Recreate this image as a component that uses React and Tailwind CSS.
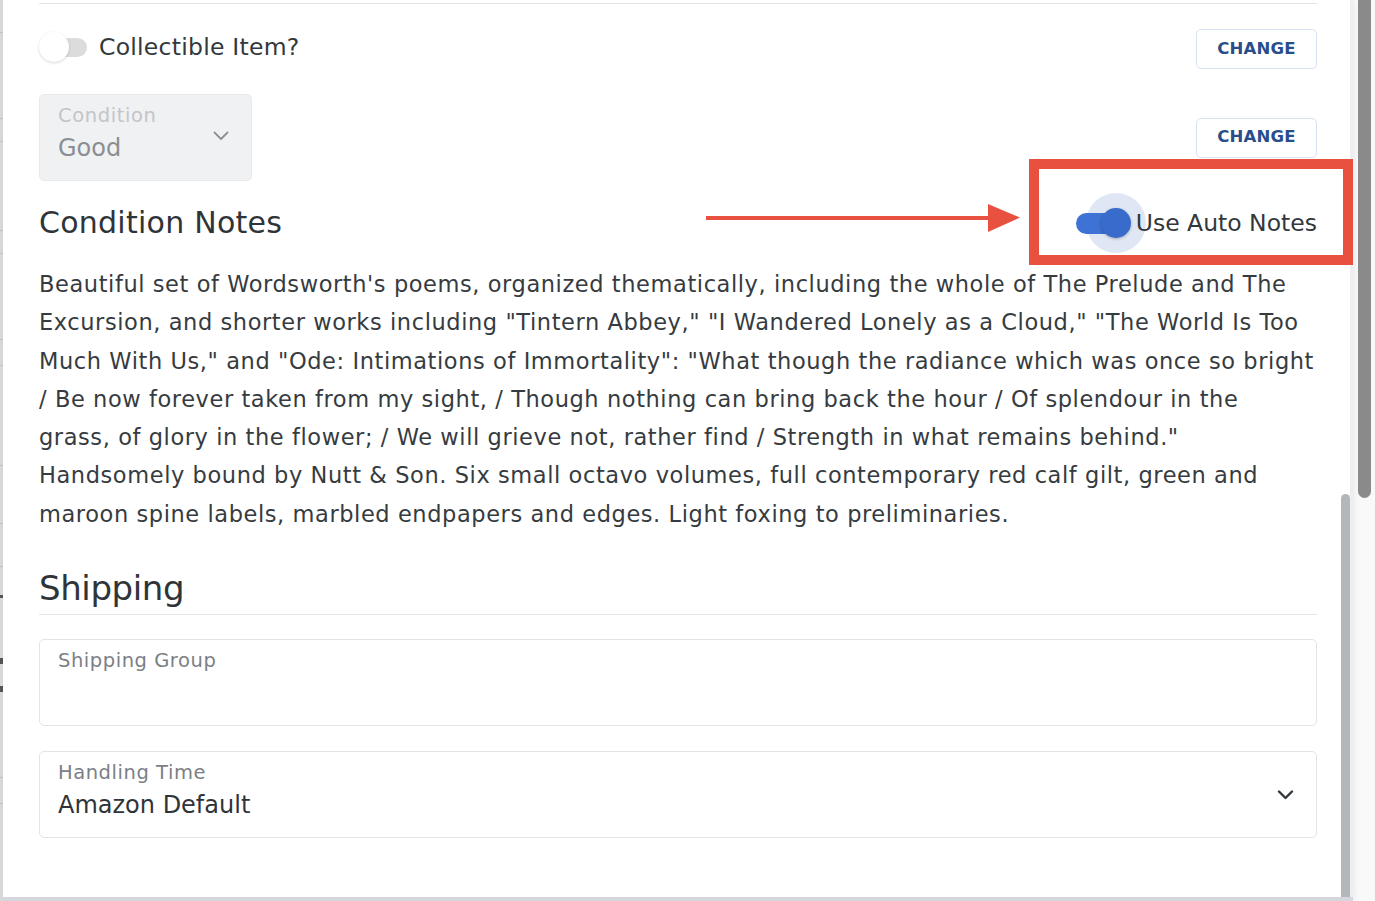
import React from "react";

function Chevron({ className, stroke = "#8a8d91", width = 2 }) {
  return (
    <svg className={className} viewBox="0 0 16 10" fill="none">
      <polyline points="1.5,1.5 8,8 14.5,1.5" stroke={stroke} strokeWidth={width} strokeLinecap="round" strokeLinejoin="round" />
    </svg>
  );
}

function ChangeButton() {
  return (
    <button className="w-[121px] h-[40px] border border-[#d8e2f3] rounded-[5px] bg-white text-[#2a4d8b] font-bold text-[16.5px] tracking-[0.2px] flex items-center justify-center">
      CHANGE
    </button>
  );
}

export default function App() {
  return (
    <div
      className="relative w-[1375px] h-[901px] overflow-hidden bg-[#f9f9f9] flex"
      style={{ fontFamily: "'DejaVu Sans', Inter, sans-serif" }}
    >
      {/* backdrop sliver */}
      <div className="w-[3px] h-full bg-[#d9d9d9] flex flex-col">
        <div className="mt-[32px] h-px bg-[#c4c4c4]" />
        <div className="mt-[85px] h-px bg-[#c4c4c4]" />
        <div className="mt-[22px] h-px bg-[#c4c4c4]" />
        <div className="mt-[88px] h-px bg-[#c4c4c4]" />
        <div className="mt-[22px] h-px bg-[#c4c4c4]" />
        <div className="mt-[85px] h-px bg-[#c4c4c4]" />
        <div className="mt-[25px] h-px bg-[#c4c4c4]" />
        <div className="mt-[99px] h-px bg-[#c4c4c4]" />
        <div className="mt-[57px] h-px bg-[#c4c4c4]" />
        <div className="mt-[42px] h-px bg-[#c4c4c4]" />
        <div className="mt-[28px] h-[3px] bg-[#555]" />
        <div className="mt-[60px] h-[6px] bg-[#555]" />
        <div className="mt-[22px] h-[6px] bg-[#555]" />
        <div className="mt-[85px] h-px bg-[#c4c4c4]" />
        <div className="mt-[25px] h-px bg-[#c4c4c4]" />
      </div>

      {/* modal */}
      <div className="w-[1350px] h-full flex flex-col bg-white shadow-[2px_0_6px_rgba(0,0,0,0.06)]">
        <div className="flex flex-1 min-h-0">
          <div className="flex-1 pl-[36px] pr-[24px] text-[#33383d]">
            <div className="mt-[3px] border-t border-[#e4e5e6]" />

            {/* row 1 */}
            <div className="mt-[25px] h-[40px] flex items-center justify-between">
              <div className="flex items-center pb-[4px]">
                <div className="relative w-[48px] h-[30px]">
                  <div className="absolute left-[5px] top-[5.5px] w-[43px] h-[19px] rounded-full bg-[#dcdcdc]" />
                  <div className="absolute left-0 top-0 w-[30px] h-[30px] rounded-full bg-white shadow-[0_1px_3px_rgba(0,0,0,0.16)]" />
                </div>
                <span className="ml-[12px] text-[23.5px] leading-[30px] tracking-[0.25px]">Collectible Item?</span>
              </div>
              <ChangeButton />
            </div>

            {/* row 2 */}
            <div className="mt-[25px] flex items-center justify-between">
              <div className="w-[213px] h-[87px] bg-[#f0f1f2] border border-[#e8e9ea] rounded-[5px] flex items-start justify-between pl-[18px] pr-[22px] pt-[7px]">
                <div className="flex flex-col">
                  <span className="text-[19.5px] leading-[28px] text-[#c3c5c8] tracking-[0.6px]">Condition</span>
                  <span className="text-[24px] leading-[36px] text-[#8b8e92]">Good</span>
                </div>
                <Chevron className="w-[16px] h-[10px] mt-[29px]" stroke="#8d9094" width={1.8} />
              </div>
              <ChangeButton />
            </div>

            {/* row 3 */}
            <div className="mt-[18px] h-[48px] flex items-center justify-between">
              <h2 className="text-[30px] leading-[40px] text-[#2f3439] tracking-[0.25px]">Condition Notes</h2>
              <div className="flex items-center">
                <div className="relative w-[55px] h-[30px]">
                  <div className="absolute left-[10px] top-[-15px] w-[60px] h-[60px] rounded-full bg-[#dfe7f5]" />
                  <div className="absolute left-0 top-[4.5px] w-[45px] h-[21px] rounded-full bg-[#3e72d4]" />
                  <div className="absolute right-0 top-0 w-[30px] h-[30px] rounded-full bg-[#386bcb] shadow-[0_1px_3px_rgba(0,0,0,0.25)]" />
                </div>
                <span className="relative ml-[5px] text-[23.5px] leading-[30px]">Use Auto Notes</span>
              </div>
            </div>

            {/* paragraph */}
            <p className="mt-[18px] text-[22.5px] leading-[38.3px] text-[#363b40] tracking-[0.58px] whitespace-nowrap">
              Beautiful set of Wordsworth's poems, organized thematically, including the whole of The Prelude and The
              <br />
              Excursion, and shorter works including "Tintern Abbey," "I Wandered Lonely as a Cloud," "The World Is Too
              <br />
              Much With Us," and "Ode: Intimations of Immortality": "What though the radiance which was once so bright
              <br />
              / Be now forever taken from my sight, / Though nothing can bring back the hour / Of splendour in the
              <br />
              grass, of glory in the flower; / We will grieve not, rather find / Strength in what remains behind."
              <br />
              Handsomely bound by Nutt &amp; Son. Six small octavo volumes, full contemporary red calf gilt, green and
              <br />
              maroon spine labels, marbled endpapers and edges. Light foxing to preliminaries.
            </p>

            {/* shipping */}
            <h2 className="mt-[29px] text-[34px] leading-[52px] text-[#2f3439] tracking-[-0.4px] border-b border-[#e2e3e4]">Shipping</h2>

            <div className="mt-[24px] h-[87px] border border-[#e3e4e5] rounded-[5px] pl-[18px] pt-[7px]">
              <span className="text-[19.5px] leading-[28px] text-[#7c8086] tracking-[0.55px]">Shipping Group</span>
            </div>

            <div className="mt-[25px] h-[87px] border border-[#e3e4e5] rounded-[5px] pl-[18px] pr-[22px] pt-[7px] flex items-start justify-between">
              <div className="flex flex-col">
                <span className="text-[19.5px] leading-[28px] text-[#7c8086] tracking-[0.55px]">Handling Time</span>
                <span className="text-[24px] leading-[36px] text-[#2f3439]">Amazon Default</span>
              </div>
              <Chevron className="w-[17px] h-[10px] mt-[31px]" stroke="#33383d" width={2.4} />
            </div>
          </div>

          {/* inner scrollbar */}
          <div className="w-[12px] h-full flex">
            <div className="mt-[494px] w-[9px] bg-[#b3b7bb] rounded-t-full" />
            <div className="w-[3px] bg-[#eeeeee]" />
          </div>
        </div>
        <div className="h-[4px] bg-[#d6d6df]" />
      </div>

      {/* page scrollbar */}
      <div className="w-[22px] h-full pl-[5px]">
        <div className="w-[13px] h-[498px] bg-[#8a8a8a] rounded-b-full" />
      </div>

      {/* annotation: arrow */}
      <svg className="absolute left-[700px] top-[200px] w-[325px] h-[36px]" viewBox="0 0 325 36">
        <rect x="6" y="16" width="285" height="4" fill="#e8513f" />
        <polygon points="288,4 320,17.5 288,32" fill="#e8513f" />
      </svg>

      {/* annotation: box */}
      <div className="absolute left-[1029px] top-[159px] w-[324px] h-[106px] border-[10px] border-[#e8513f]" />
    </div>
  );
}
